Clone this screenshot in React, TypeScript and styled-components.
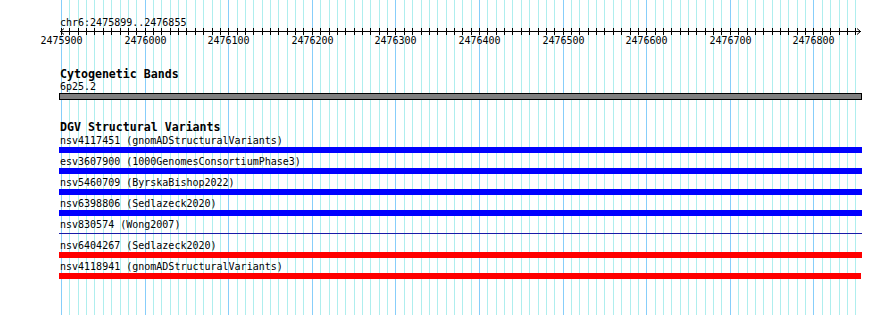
import React from 'react';
import styled, { createGlobalStyle } from 'styled-components';

const VIEW_START = 2475899;
const VIEW_END = 2476855;
const ORIGIN = 60.2;
const PX_PER_BP = 0.836;
const TRACK_LEFT = 59;
const TRACK_RIGHT = 862;
const WIDTH = 890;
const HEIGHT = 315;
const MONO = '"DejaVu Sans Mono", "Liberation Mono", monospace';

const toX = (bp: number) => ORIGIN + (bp - VIEW_START) * PX_PER_BP;

type Variant = {
    name: string;
    source: string;
    start: number;
    end: number;
    color: string;
    thin?: boolean;
};

const variants: Variant[] = [
    { name: 'nsv4117451', source: 'gnomADStructuralVariants', start: 2470001, end: 2490000, color: '#0000ff' },
    { name: 'esv3607900', source: '1000GenomesConsortiumPhase3', start: 2468210, end: 2481032, color: '#0000ff' },
    { name: 'nsv5460709', source: 'ByrskaBishop2022', start: 2471556, end: 2479911, color: '#0000ff' },
    { name: 'nsv6398806', source: 'Sedlazeck2020', start: 2465780, end: 2478301, color: '#0000ff' },
    { name: 'nsv830574', source: 'Wong2007', start: 2402191, end: 2512677, color: '#1a1aa8', thin: true },
    { name: 'nsv6404267', source: 'Sedlazeck2020', start: 2474416, end: 2477020, color: '#ff0000' },
    { name: 'nsv4118941', source: 'gnomADStructuralVariants', start: 2475780, end: 2476857, color: '#ff0000' },
];

const gridTicks: number[] = [];
for (let bp = 2475900; bp <= VIEW_END; bp += 10) gridTicks.push(bp);
const majorTicks = gridTicks.filter((bp) => bp % 100 === 0);

const GlobalStyle = createGlobalStyle`
    html, body {
        margin: 0;
        padding: 0;
        background: #ffffff;
    }
    body {
        font-family: ${MONO};
        color: #000000;
    }
`;

const Panel = styled.div`
    position: relative;
    width: ${WIDTH}px;
    height: ${HEIGHT}px;
    overflow: hidden;
    background: #ffffff;
`;

const GridLayer = styled.svg`
    position: absolute;
    inset: 0;
    z-index: 0;
`;

const Content = styled.div`
    position: relative;
    z-index: 1;
    padding-top: 17px;
`;

const SmallText = styled.div`
    font-size: 10px;
    line-height: 11px;
    height: 11px;
    padding-left: 60px;
    white-space: pre;
`;

const TrackTitle = styled.div<{ $gap: number }>`
    margin-top: ${(p) => p.$gap}px;
    padding-left: 60px;
    font-size: 11.6px;
    line-height: 11px;
    height: 11px;
    padding-bottom: 1px;
    font-weight: bold;
    white-space: pre;
`;

const RulerSvg = styled.svg`
    display: block;
    overflow: visible;
`;

const BandBar = styled.div`
    box-sizing: border-box;
    margin-top: 1px;
    margin-left: ${TRACK_LEFT}px;
    width: ${TRACK_RIGHT - TRACK_LEFT}px;
    height: 7px;
    background: #808080;
    border: 1px solid #000000;
`;

const VariantList = styled.div`
    margin-top: 1px;
    display: flex;
    flex-direction: column;
    gap: 3px;
`;

const VariantRow = styled.div`
    display: flex;
    flex-direction: column;
    gap: 1px;
    height: 18px;
`;

const BarLane = styled.div`
    display: flex;
    align-items: flex-start;
    height: 6px;
`;

const VariantBar = styled.div<{ $color: string; $thin?: boolean }>`
    height: ${(p) => (p.$thin ? 1 : 6)}px;
    margin-top: ${(p) => (p.$thin ? 2 : 0)}px;
    background: ${(p) => p.$color};
`;

const Grid: React.FC = () => (
    <GridLayer width={WIDTH} height={HEIGHT} shapeRendering="crispEdges">
        {gridTicks.map((bp) => {
            const x = Math.round(toX(bp)) + 0.5;
            return (
                <line
                    key={bp}
                    x1={x}
                    x2={x}
                    y1={0}
                    y2={HEIGHT}
                    stroke={bp % 100 === 0 ? '#87cefa' : '#afeeee'}
                    strokeWidth={1}
                />
            );
        })}
    </GridLayer>
);

const Ruler: React.FC = () => (
    <RulerSvg width={WIDTH} height={20} shapeRendering="crispEdges">
        <line x1={60} x2={861} y1={3.5} y2={3.5} stroke="#000" />
        <polyline points="64,0.5 60.5,3.5 64,6.5" fill="none" stroke="#000" shapeRendering="auto" />
        <polyline points="857,0.5 860.5,3.5 857,6.5" fill="none" stroke="#000" shapeRendering="auto" />
        {gridTicks.map((bp) => {
            const x = Math.round(toX(bp)) + 0.5;
            return <line key={bp} x1={x} x2={x} y1={0} y2={7} stroke="#000" />;
        })}
        {majorTicks.map((bp) => (
            <text
                key={bp}
                x={Math.round(toX(bp)) + 0.5}
                y={16}
                textAnchor="middle"
                fontFamily={MONO}
                fontSize={10}
                fill="#000"
            >
                {bp}
            </text>
        ))}
    </RulerSvg>
);

const App: React.FC = () => (
    <>
        <GlobalStyle />
        <Panel>
            <Grid />
            <Content>
                <SmallText>{`chr6:${VIEW_START}..${VIEW_END}`}</SmallText>
                <Ruler />

                <TrackTitle $gap={21}>Cytogenetic Bands</TrackTitle>
                <SmallText>6p25.2</SmallText>
                <BandBar />

                <TrackTitle $gap={22}>DGV Structural Variants</TrackTitle>
                <VariantList>
                    {variants.map((v) => {
                        const left = Math.max(TRACK_LEFT, Math.round(toX(v.start)));
                        const right = Math.min(TRACK_RIGHT, Math.round(toX(v.end)));
                        return (
                            <VariantRow key={v.name}>
                                <SmallText>{`${v.name} (${v.source})`}</SmallText>
                                <BarLane>
                                    <VariantBar
                                        $color={v.color}
                                        $thin={v.thin}
                                        style={{ marginLeft: left, width: right - left }}
                                    />
                                </BarLane>
                            </VariantRow>
                        );
                    })}
                </VariantList>
            </Content>
        </Panel>
    </>
);

export default App;
